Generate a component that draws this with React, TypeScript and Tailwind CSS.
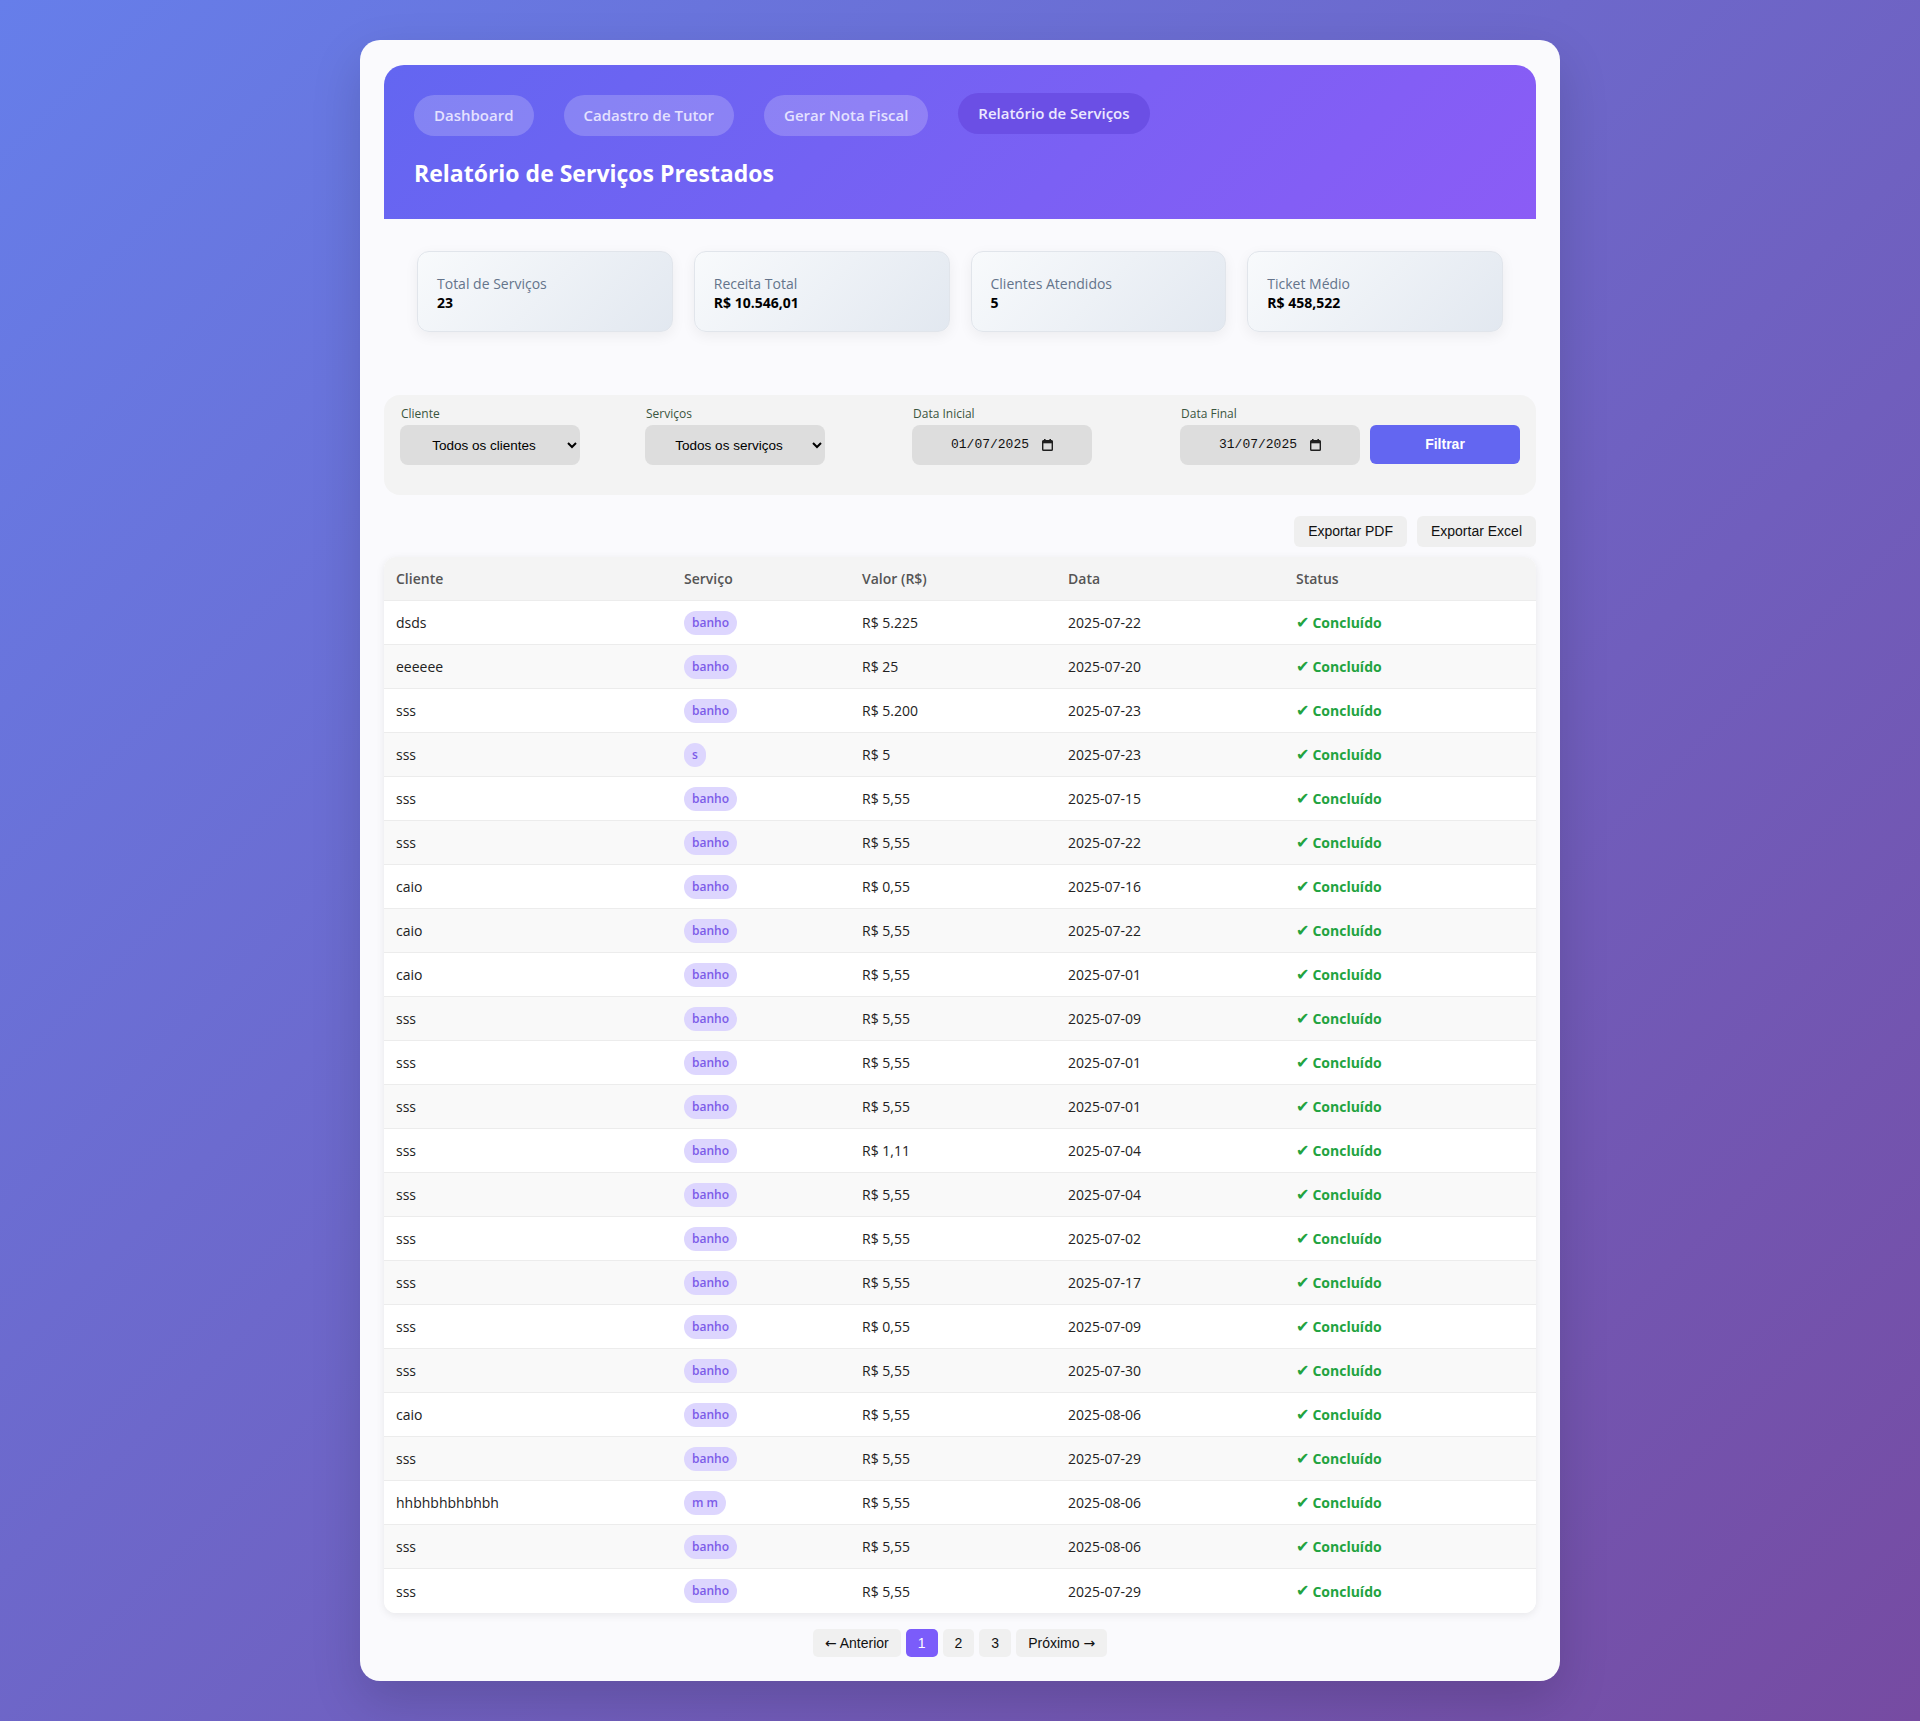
import React from 'react'

type Row = {
    cliente: string
    servico: string
    valor: string
    data: string
}

const rows: Row[] = [
    { cliente: 'dsds', servico: 'banho', valor: 'R$ 5.225', data: '2025-07-22' },
    { cliente: 'eeeeee', servico: 'banho', valor: 'R$ 25', data: '2025-07-20' },
    { cliente: 'sss', servico: 'banho', valor: 'R$ 5.200', data: '2025-07-23' },
    { cliente: 'sss', servico: 's', valor: 'R$ 5', data: '2025-07-23' },
    { cliente: 'sss', servico: 'banho', valor: 'R$ 5,55', data: '2025-07-15' },
    { cliente: 'sss', servico: 'banho', valor: 'R$ 5,55', data: '2025-07-22' },
    { cliente: 'caio', servico: 'banho', valor: 'R$ 0,55', data: '2025-07-16' },
    { cliente: 'caio', servico: 'banho', valor: 'R$ 5,55', data: '2025-07-22' },
    { cliente: 'caio', servico: 'banho', valor: 'R$ 5,55', data: '2025-07-01' },
    { cliente: 'sss', servico: 'banho', valor: 'R$ 5,55', data: '2025-07-09' },
    { cliente: 'sss', servico: 'banho', valor: 'R$ 5,55', data: '2025-07-01' },
    { cliente: 'sss', servico: 'banho', valor: 'R$ 5,55', data: '2025-07-01' },
    { cliente: 'sss', servico: 'banho', valor: 'R$ 1,11', data: '2025-07-04' },
    { cliente: 'sss', servico: 'banho', valor: 'R$ 5,55', data: '2025-07-04' },
    { cliente: 'sss', servico: 'banho', valor: 'R$ 5,55', data: '2025-07-02' },
    { cliente: 'sss', servico: 'banho', valor: 'R$ 5,55', data: '2025-07-17' },
    { cliente: 'sss', servico: 'banho', valor: 'R$ 0,55', data: '2025-07-09' },
    { cliente: 'sss', servico: 'banho', valor: 'R$ 5,55', data: '2025-07-30' },
    { cliente: 'caio', servico: 'banho', valor: 'R$ 5,55', data: '2025-08-06' },
    { cliente: 'sss', servico: 'banho', valor: 'R$ 5,55', data: '2025-07-29' },
    { cliente: 'hhbhbhbhbhbh', servico: 'm m', valor: 'R$ 5,55', data: '2025-08-06' },
    { cliente: 'sss', servico: 'banho', valor: 'R$ 5,55', data: '2025-08-06' },
    { cliente: 'sss', servico: 'banho', valor: 'R$ 5,55', data: '2025-07-29' },
]

const stats = [
    { label: 'Total de Serviços', value: '23' },
    { label: 'Receita Total', value: 'R$ 10.546,01' },
    { label: 'Clientes Atendidos', value: '5' },
    { label: 'Ticket Médio', value: 'R$ 458,522' },
]

const navItems = ['Dashboard', 'Cadastro de Tutor', 'Gerar Nota Fiscal', 'Relatório de Serviços']

const cols = 'grid grid-cols-[288px_178px_206px_228px_252px]'

function CalendarIcon() {
    return (
        <svg width="11" height="12" viewBox="0 0 11 12" fill="none">
            <rect x="2" y="0" width="1.6" height="2.5" fill="#1f1f1f" />
            <rect x="7.4" y="0" width="1.6" height="2.5" fill="#1f1f1f" />
            <rect x="0.7" y="1.7" width="9.6" height="9.6" rx="0.8" stroke="#1f1f1f" strokeWidth="1.4" />
            <rect x="0.7" y="1.7" width="9.6" height="2.6" fill="#1f1f1f" />
        </svg>
    )
}

function DateField({ label, value, width }: { label: string, value: string, width: string }) {
    return (
        <div className={`flex flex-col ${width}`}>
            <label className="text-[12px] leading-[16px] font-medium text-[#3a5540] mb-[3px] pl-[1px]">{label}</label>
            <div className="w-[180px] h-[40px] rounded-lg bg-[#dddddd] flex items-center justify-center gap-[13px] text-[13px] text-[#111] font-['Liberation_Mono',monospace]">
                <span>{value}</span>
                <CalendarIcon />
            </div>
        </div>
    )
}

function SelectField({ label, option, width }: { label: string, option: string, width: string }) {
    return (
        <div className={`flex flex-col ${width}`}>
            <label className="text-[12px] leading-[16px] font-medium text-[#3a5540] mb-[3px] pl-[1px]">{label}</label>
            <select className="w-[180px] h-[40px] rounded-lg bg-[#dddddd] border-0 px-[10px] text-[13.5px] text-black [text-align-last:center] font-['Liberation_Sans',Arial,sans-serif] outline-none">
                <option>{option}</option>
            </select>
        </div>
    )
}

export default function App() {
    return (
        <div className="min-h-screen bg-[linear-gradient(135deg,#667eea_0%,#764ba2_100%)] px-10 py-10 font-['Open_Sans',sans-serif]">
            <div className="max-w-[1200px] mx-auto bg-[#fafafd] rounded-[20px] px-6 pt-[25px] pb-6 shadow-[0_20px_50px_rgba(0,0,0,0.15)]">
                {/* header */}
                <div className="rounded-t-[20px] bg-[linear-gradient(135deg,#6366f1_0%,#8b5cf6_100%)] px-[30px] pt-[30px] pb-[29px]">
                    <nav className="flex items-center gap-[30px] mb-[21px]">
                        {navItems.map((item, i) => (
                            <a
                                key={item}
                                href="#"
                                className={i === 3
                                    ? 'px-[20px] py-[10px] leading-[21px] rounded-full bg-[#6b4fe5] text-[#ece8ff] text-[15px] font-semibold -translate-y-0.5'
                                    : 'px-[20px] py-[10px] leading-[21px] rounded-full bg-white/20 text-[#e4e1ff] text-[15px] font-semibold'}
                            >
                                {item}
                            </a>
                        ))}
                    </nav>
                    <h1 className="text-white text-[23px] leading-[33px] font-bold">Relatório de Serviços Prestados</h1>
                </div>

                {/* stats */}
                <div className="grid grid-cols-4 gap-[21px] px-[33px] pt-8">
                    {stats.map(s => (
                        <div key={s.label} className="h-[81px] rounded-xl border border-[#e1e5eb] bg-[linear-gradient(135deg,#f8fafc_0%,#e2e8f0_100%)] shadow-[0_4px_14px_rgba(0,0,0,0.06)] pt-[22px] px-[19px]">
                            <p className="text-[14px] leading-[19px] font-medium text-[#64748b]">{s.label}</p>
                            <p className="text-[14px] leading-[19px] font-bold text-black">{s.value}</p>
                        </div>
                    ))}
                </div>

                {/* filters */}
                <div className="mt-[63px] h-[100px] rounded-2xl bg-[#f3f3f3] pt-[11px] px-4 flex items-start">
                    <SelectField label="Cliente" option="Todos os clientes" width="w-[245px]" />
                    <SelectField label="Serviços" option="Todos os serviços" width="w-[267px]" />
                    <DateField label="Data Inicial" value="01/07/2025" width="w-[268px]" />
                    <DateField label="Data Final" value="31/07/2025" width="w-[190px]" />
                    <button type="button" className="mt-[19px] w-[150px] h-[39px] rounded-md bg-[#6366f1] text-white text-[14px] font-bold font-['Liberation_Sans',Arial,sans-serif]">
                        Filtrar
                    </button>
                </div>

                {/* export */}
                <div className="flex justify-end gap-[10px] mt-[21px] mb-[10px]">
                    <button type="button" className="h-[31px] px-[14px] rounded-md bg-[#efefef] text-[14px] text-[#111] font-['Liberation_Sans',Arial,sans-serif]">Exportar PDF</button>
                    <button type="button" className="h-[31px] px-[14px] rounded-md bg-[#efefef] text-[14px] text-[#111] font-['Liberation_Sans',Arial,sans-serif]">Exportar Excel</button>
                </div>

                {/* table */}
                <div className="rounded-xl overflow-hidden bg-white shadow-[0_2px_8px_rgba(0,0,0,0.08)]">
                    <div className={`${cols} h-[44px] items-center bg-[#f4f4f4] border-b border-[#ececec] text-[14px] font-semibold text-[#555]`}>
                        <div className="px-3">Cliente</div>
                        <div className="px-3">Serviço</div>
                        <div className="px-3">Valor (R$)</div>
                        <div className="px-3">Data</div>
                        <div className="px-3">Status</div>
                    </div>
                    {rows.map((r, i) => (
                        <div
                            key={i}
                            className={`${cols} h-[44px] items-center text-[14px] text-[#222] ${i % 2 === 1 ? 'bg-[#f9f9f9]' : 'bg-white'} ${i < rows.length - 1 ? 'border-b border-[#ececec]' : ''}`}
                        >
                            <div className="px-3">{r.cliente}</div>
                            <div className="px-3">
                                <span className="inline-block px-[8px] py-[3px] leading-[18px] rounded-[12px] bg-[#ddd6fe] text-[#7c5ce8] text-[12px] font-semibold">{r.servico}</span>
                            </div>
                            <div className="px-3">{r.valor}</div>
                            <div className="px-3">{r.data}</div>
                            <div className="px-3 font-bold text-[#22a33f] flex items-center">
                                <span className="font-['DejaVu_Sans',sans-serif] text-[16px] leading-none mr-[3px]">✔</span>
                                <span>Concluído</span>
                            </div>
                        </div>
                    ))}
                </div>

                {/* pagination */}
                <div className="flex justify-center gap-[5px] mt-4 font-['Liberation_Sans',Arial,sans-serif] text-[14px] text-[#111]">
                    <button type="button" className="h-7 px-3 rounded-[5px] bg-[#f0f0f0]"><span className="font-['DejaVu_Sans',sans-serif]">←</span> Anterior</button>
                    <button type="button" className="h-7 px-3 rounded-[5px] bg-[#7b5cfa] text-white">1</button>
                    <button type="button" className="h-7 px-3 rounded-[5px] bg-[#f0f0f0]">2</button>
                    <button type="button" className="h-7 px-3 rounded-[5px] bg-[#f0f0f0]">3</button>
                    <button type="button" className="h-7 px-3 rounded-[5px] bg-[#f0f0f0]">Próximo <span className="font-['DejaVu_Sans',sans-serif]">→</span></button>
                </div>
            </div>
        </div>
    )
}
